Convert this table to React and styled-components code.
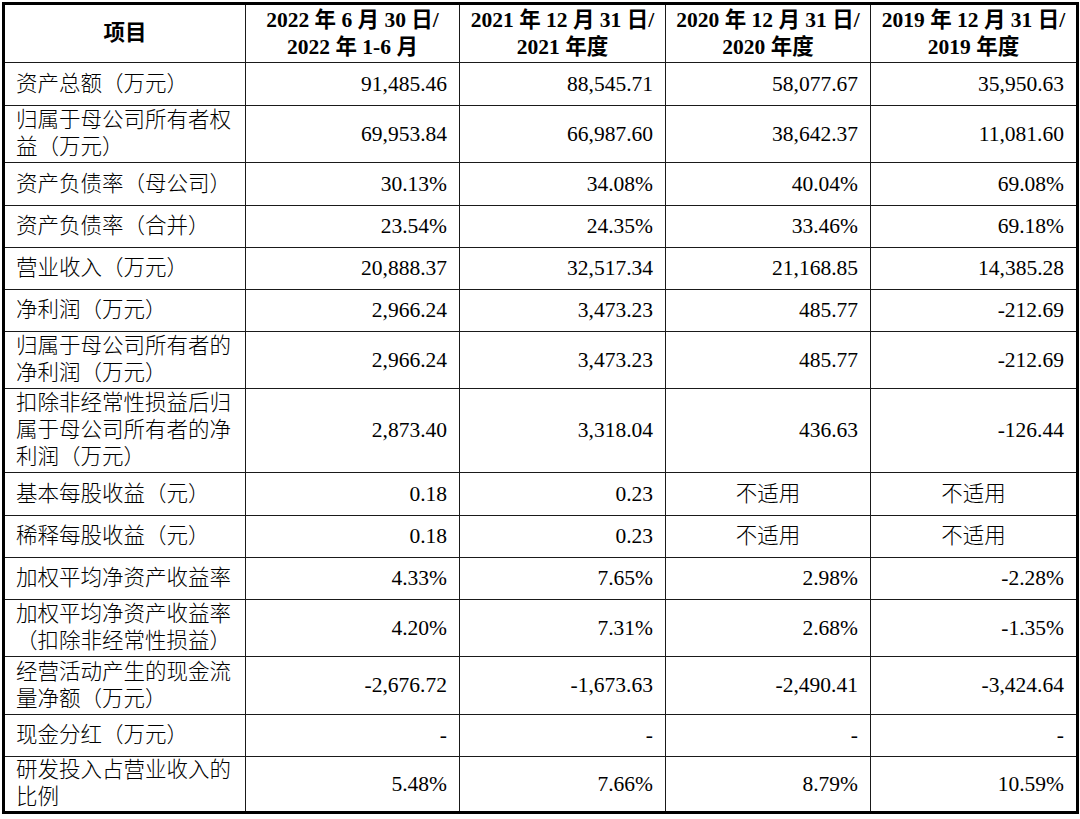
import React from "react";
import styled, { createGlobalStyle } from "styled-components";

const Global = createGlobalStyle`
  html, body { margin: 0; padding: 0; background: #fff; }
  body {
    font-family: "Liberation Serif", "Noto Sans CJK SC", serif;
    color: #000;
  }
`;

const Page = styled.div`
  padding: 2px 0 0 2px;
`;

const Grid = styled.div`
  display: grid;
  width: 1071px;
  grid-template-columns: 240px 213px 205px 204px 205px;
  grid-template-rows: 57px 42px 56px 42px 41px 41px 41px 56px 83px 42px 41px 41px 56px 57px 41px 54px;
  gap: 1px;
  background: #1a1a1a;
  border: 3px solid #000;
`;

const Cell = styled.div`
  background: #fff;
  display: flex;
  align-items: center;
  justify-content: ${(p) =>
    p.$align === "left" ? "flex-start" : p.$align === "center" ? "center" : "flex-end"};
  text-align: ${(p) => p.$align || "right"};
  padding: ${(p) => (p.$align === "left" ? "0 0 0 11px" : p.$align === "center" ? "0" : "0 12px 0 0")};
  font-size: 21.5px;
  line-height: 27px;
  font-weight: ${(p) => (p.$bold ? 700 : 300)};
  white-space: pre;
  box-sizing: border-box;
  overflow: hidden;
`;

const header = [
  "项目",
  "2022 年 6 月 30 日/\n2022 年 1-6 月",
  "2021 年 12 月 31 日/\n2021 年度",
  "2020 年 12 月 31 日/\n2020 年度",
  "2019 年 12 月 31 日/\n2019 年度",
];

const rows = [
  ["资产总额（万元）", "91,485.46", "88,545.71", "58,077.67", "35,950.63"],
  ["归属于母公司所有者权\n益（万元）", "69,953.84", "66,987.60", "38,642.37", "11,081.60"],
  ["资产负债率（母公司）", "30.13%", "34.08%", "40.04%", "69.08%"],
  ["资产负债率（合并）", "23.54%", "24.35%", "33.46%", "69.18%"],
  ["营业收入（万元）", "20,888.37", "32,517.34", "21,168.85", "14,385.28"],
  ["净利润（万元）", "2,966.24", "3,473.23", "485.77", "-212.69"],
  ["归属于母公司所有者的\n净利润（万元）", "2,966.24", "3,473.23", "485.77", "-212.69"],
  ["扣除非经常性损益后归\n属于母公司所有者的净\n利润（万元）", "2,873.40", "3,318.04", "436.63", "-126.44"],
  ["基本每股收益（元）", "0.18", "0.23", "不适用", "不适用"],
  ["稀释每股收益（元）", "0.18", "0.23", "不适用", "不适用"],
  ["加权平均净资产收益率", "4.33%", "7.65%", "2.98%", "-2.28%"],
  ["加权平均净资产收益率\n（扣除非经常性损益）", "4.20%", "7.31%", "2.68%", "-1.35%"],
  ["经营活动产生的现金流\n量净额（万元）", "-2,676.72", "-1,673.63", "-2,490.41", "-3,424.64"],
  ["现金分红（万元）", "-", "-", "-", "-"],
  ["研发投入占营业收入的\n比例", "5.48%", "7.66%", "8.79%", "10.59%"],
];

export default function App() {
  return (
    <Page>
      <Global />
      <Grid>
        {header.map((h, i) => (
          <Cell key={"h" + i} $align="center" $bold>
            {h}
          </Cell>
        ))}
        {rows.map((r, ri) =>
          r.map((c, ci) => (
            <Cell
              key={ri + "-" + ci}
              $align={ci === 0 ? "left" : c === "不适用" ? "center" : "right"}
            >
              {c}
            </Cell>
          ))
        )}
      </Grid>
    </Page>
  );
}
